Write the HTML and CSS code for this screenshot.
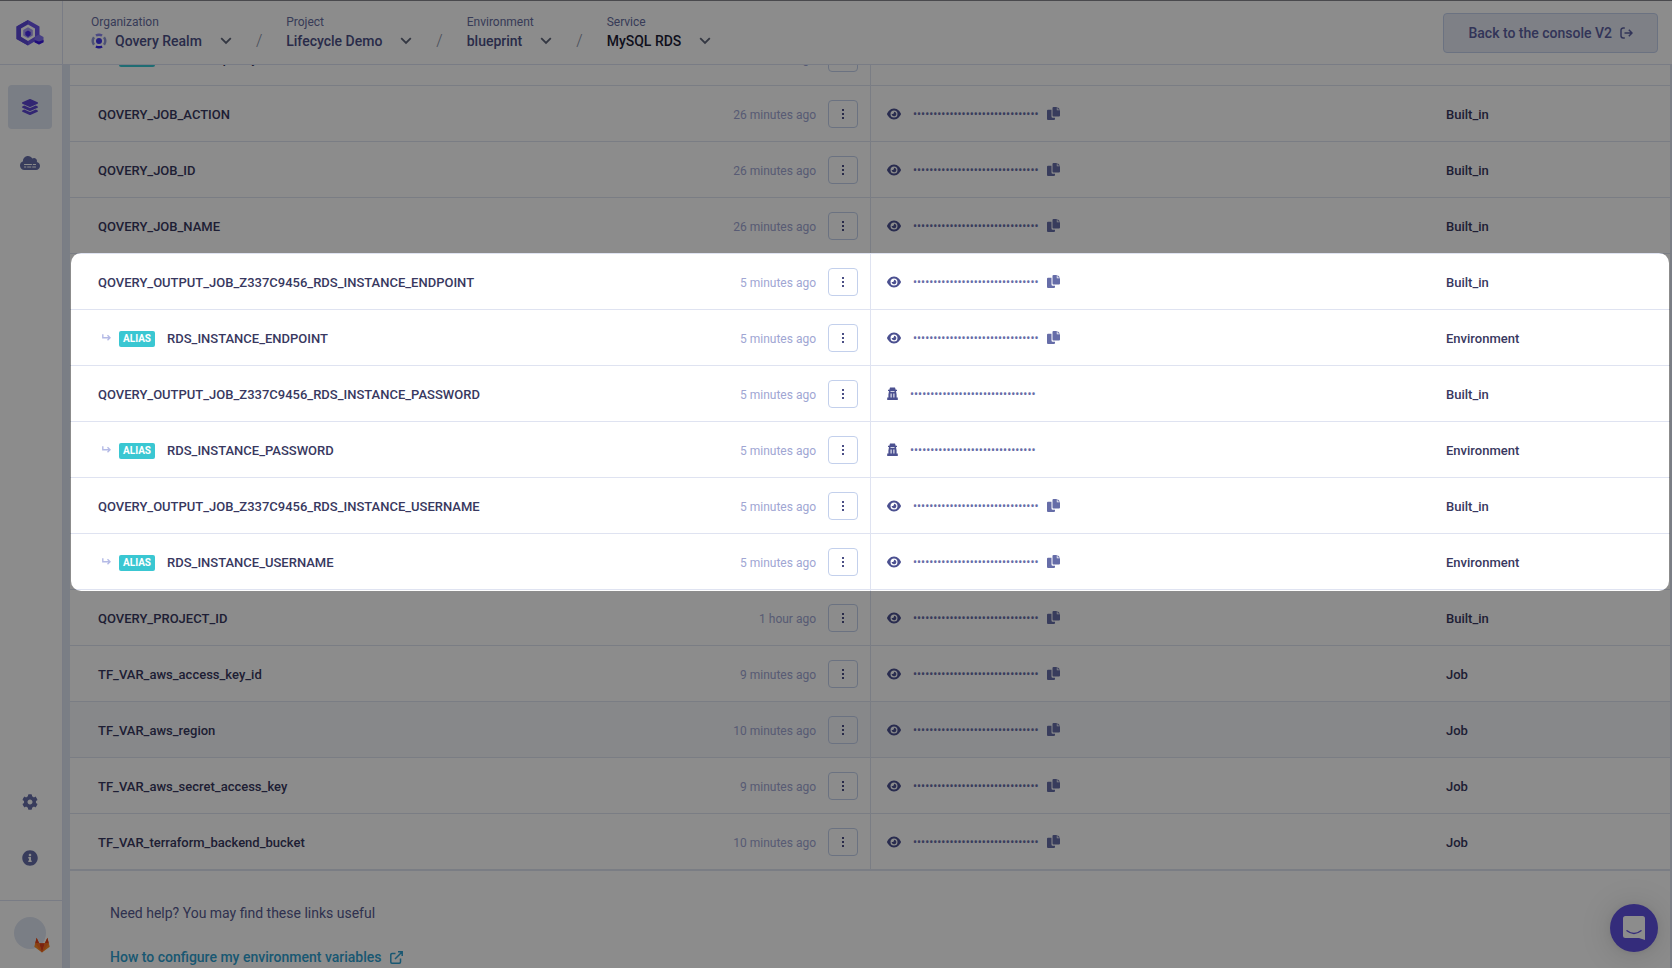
FILE: index.html
```html
<!DOCTYPE html>
<html lang="en">
<head>
<meta charset="utf-8">
<title>MySQL RDS - Environment variables</title>
<link rel="stylesheet" href="styles.css">
</head>
<body>
<svg class="sprite" aria-hidden="true">
  <symbol id="eye" viewBox="0 20 576 472"><path d="M288 32c-80.800 0-145.500 36.800-192.600 80.600C48.600 156 17.300 208 2.500 243.700c-3.300 7.900-3.300 16.700 0 24.600C17.300 304 48.600 356 95.400 399.400C142.500 443.200 207.200 480 288 480s145.500-36.800 192.600-80.600c46.800-43.500 78.100-95.400 93-131.100c3.300-7.900 3.300-16.700 0-24.600c-14.900-35.700-46.200-87.700-93-131.100C433.500 68.800 368.800 32 288 32zM144 256a144 144 0 1 1 288 0 144 144 0 1 1 -288 0zm144-64c0 35.300-28.700 64-64 64c-7.100 0-13.900-1.200-20.300-3.300c-5.500-1.800-11.900 1.600-11.700 7.400c.3 6.900 1.300 13.800 3.200 20.700c13.700 51.200 66.400 81.600 117.600 67.900s81.600-66.400 67.900-117.600c-11.100-41.500-47.800-69.400-88.600-71.100c-5.800-.2-9.200 6.100-7.400 11.700c2.100 6.400 3.300 13.200 3.300 20.300z"/></symbol>
  <symbol id="dots" viewBox="0 0 12 12"><rect x="5" y="1" width="2" height="2"/><rect x="5" y="5" width="2" height="2"/><rect x="5" y="9" width="2" height="2"/></symbol>
  <symbol id="copy" viewBox="0 0 13 13"><path d="M6.500 0H9.800v3.200H13v5.400a1 1 0 0 1-1 1H6.500a1 1 0 0 1-1-1V1a1 1 0 0 1 1-1z"/><path d="M10.500 0L13 2.500h-2.500z"/><path d="M1 2.800h3.500v6.700a1.200 1.200 0 0 0 1.200 1.200H8V12a1 1 0 0 1-1 1H1a1 1 0 0 1-1-1V3.800a1 1 0 0 1 1-1z"/></symbol>
  <symbol id="secret" viewBox="0 0 11 13"><path d="M3 .4h5l.7 2.400H10v1.200H9l.6 3.500v3h1.200V13H.2v-2.500h1.200v-3L2 4H1V2.800h1.300z"/><path class="cut" d="M3.500 4.300h4v.8h-4zM3.600 6.500h1v4h-1zM6.400 6.500h1v4h-1z"/></symbol>
  <symbol id="arrow" viewBox="0 0 9 7"><path d="M.8.3v3.400h7M5.500 1.200L8 3.700 5.500 6.200" fill="none" stroke="currentColor" stroke-width="1.400"/></symbol>
  <symbol id="chevron" viewBox="0 0 12 8"><path d="M1.200 1.200L6 6l4.800-4.800" fill="none" stroke="currentColor" stroke-width="1.800"/></symbol>
</svg>

<div class="app">
  <aside class="sidebar">
    <a class="logo" href="#" aria-label="Qovery">
      <svg width="28" height="26" viewBox="0 0 28 26">
        <path d="M12 0l11.500 6.500v12L12 25.500.500 19V6.500z" fill="#6a54e8"/>
        <path d="M12 0L.5 6.500V19L12 25.500V21l-7-4.200V8.600L12 4.500z" fill="#5b48d8"/>
        <path d="M12 4.500l7 4.100v8.200L12 21l-7-4.200V8.600z" fill="#fff"/>
        <path d="M12 7.300l4.800 2.700v5.600L12 18.300l-4.800-2.700V10z" fill="#a79cf5"/>
        <path d="M12 10.500l2.700 1.500v3L12 17l-2.700-2v-3z" fill="#4a2bea"/>
        <path d="M23 14.500l4.500 2.500v5.200L23 24.500l-4.500-2.300V17z" fill="#8273f2"/>
        <path d="M18.500 20l4.500 1.500 4.500-1.500v2.200L23 24.500l-4.500-2.300z" fill="#3b16e0"/>
      </svg>
    </a>
    <nav class="nav">
      <a class="nav-item active" href="#" aria-label="Projects"><svg width="16" height="16" viewBox="0 0 512 512"><path d="M12.410 148.020l232.940 105.670c6.800 3.090 14.490 3.090 21.290 0l232.940-105.670c16.550-7.510 16.550-32.520 0-40.030L266.650 2.310a25.607 25.607 0 0 0-21.290 0L12.410 107.980c-16.550 7.510-16.550 32.530 0 40.040zm487.180 88.280l-58.090-26.330-161.640 73.270c-7.560 3.430-15.590 5.170-23.860 5.170s-16.290-1.740-23.860-5.170L70.510 209.970l-58.100 26.330c-16.550 7.500-16.550 32.500 0 40l232.940 105.590c6.800 3.080 14.490 3.080 21.290 0L499.590 276.300c16.550-7.500 16.550-32.500 0-40zm0 127.800l-57.870-26.230-161.860 73.370c-7.560 3.430-15.590 5.170-23.860 5.170s-16.290-1.740-23.860-5.170L70.290 337.870 12.410 364.100c-16.550 7.500-16.550 32.500 0 40l232.940 105.590c6.800 3.080 14.490 3.080 21.290 0L499.590 404.100c16.550-7.500 16.550-32.500 0-40z"/></svg></a>
      <a class="nav-item" href="#" aria-label="Clusters"><svg width="20" height="16" viewBox="0 0 640 512"><path d="M537.600 226.600c4.100-10.700 6.400-22.400 6.400-34.600 0-53-43-96-96-96-19.700 0-38.100 6-53.300 16.200C367 64.200 315.300 32 256 32c-88.400 0-160 71.600-160 160 0 2.700.1 5.400.2 8.100C40.200 219.800 0 273.200 0 336c0 79.500 64.500 144 144 144h368c70.700 0 128-57.300 128-128 0-61.900-44-113.600-102.400-125.400z"/><path class="cut" d="M130 288h250v32H130zM410 288h100v32H410zM130 364h70v32h-70zM230 364h130v32H230zM390 364h120v32H390z"/></svg></a>
    </nav>
    <nav class="nav nav-bottom">
      <a class="nav-item" href="#" aria-label="Settings"><svg width="16" height="16" viewBox="0 0 512 512"><path d="M487.400 315.700l-42.600-24.600c4.300-23.200 4.300-47 0-70.200l42.600-24.600c4.900-2.800 7.100-8.600 5.500-14-11.100-35.600-30-67.800-54.700-94.600-3.800-4.100-10-5.100-14.800-2.300L380.800 110c-17.900-15.400-38.500-27.300-60.800-35.100V25.800c0-5.600-3.900-10.500-9.400-11.700-36.700-8.200-74.300-7.800-109.200 0-5.500 1.200-9.400 6.100-9.400 11.700V75c-22.200 7.900-42.800 19.800-60.800 35.100L88.700 85.500c-4.900-2.800-11-1.900-14.800 2.300-24.700 26.700-43.600 58.900-54.700 94.600-1.700 5.400.6 11.200 5.500 14L67.300 221c-4.300 23.200-4.300 47 0 70.200l-42.600 24.600c-4.900 2.800-7.100 8.600-5.500 14 11.100 35.600 30 67.800 54.700 94.600 3.800 4.100 10 5.100 14.800 2.300l42.600-24.600c17.900 15.400 38.500 27.300 60.800 35.100v49.200c0 5.600 3.900 10.500 9.400 11.700 36.700 8.200 74.300 7.800 109.200 0 5.500-1.200 9.400-6.100 9.400-11.700v-49.200c22.200-7.900 42.800-19.800 60.800-35.100l42.600 24.600c4.900 2.800 11 1.900 14.800-2.300 24.700-26.700 43.600-58.900 54.700-94.600 1.500-5.500-.7-11.300-5.600-14.100zM256 336c-44.100 0-80-35.900-80-80s35.900-80 80-80 80 35.900 80 80-35.900 80-80 80z"/></svg></a>
      <a class="nav-item" href="#" aria-label="Information"><svg width="16" height="16" viewBox="0 0 512 512"><path d="M256 8C119.043 8 8 119.083 8 256c0 136.997 111.043 248 248 248s248-111.003 248-248C504 119.083 392.957 8 256 8zm0 110c23.196 0 42 18.804 42 42s-18.804 42-42 42-42-18.804-42-42 18.804-42 42-42zm56 254c0 6.627-5.373 12-12 12h-88c-6.627 0-12-5.373-12-12v-24c0-6.627 5.373-12 12-12h12v-64h-12c-6.627 0-12-5.373-12-12v-24c0-6.627 5.373-12 12-12h64c6.627 0 12 5.373 12 12v100h12c6.627 0 12 5.373 12 12v24z"/></svg></a>
    </nav>
    <div class="account">
      <button class="avatar" type="button" aria-label="Account">
        <svg class="gitlab" width="16" height="16" viewBox="0 0 16 16"><path d="M8 15.500L.3 9.800 2.600.8l2.600 5.400h5.600L13.400.8l2.300 9z" fill="#fc8a26"/><path d="M8 15.500L5.200 6.200h5.600z" fill="#e0401f"/><path d="M2.600.8l2.600 5.400H1.200zM13.400.8l-2.600 5.400h4z" fill="#e0401f"/><path d="M8 15.500L1.200 6.200h4zM8 15.500l6.800-9.300h-4z" fill="#f96d26"/></svg>
      </button>
    </div>
  </aside>

  <div class="body">
    <header class="topbar">
      <nav class="crumbs" aria-label="Breadcrumb">
        <div class="crumb"><a href="#"><span class="crumb-label">Organization</span><span class="crumb-value"><svg width="16" height="16" viewBox="0 0 16 16"><circle cx="8" cy="8" r="3" fill="#4338e8"/><path d="M4.300 1.500a8 8 0 0 1 7.400 0L10.500 3.500a6 6 0 0 0-5 0z" fill="#8a86f0"/><path d="M4.300 14.500a8 8 0 0 0 7.400 0L10.500 12.500a6 6 0 0 1-5 0z" fill="#3326e8"/><path d="M2 3.500a8 8 0 0 0 0 9L4 11a5 5 0 0 1 0-6z" fill="#8f96d8"/><path d="M14 3.500a8 8 0 0 1 0 9L12 11a5 5 0 0 0 0-6z" fill="#8f96d8"/></svg>Qovery Realm</span></a><button type="button" aria-label="Change organization"><svg width="12" height="8"><use href="#chevron"/></svg></button></div>
        <span class="slash">/</span>
        <div class="crumb"><a href="#"><span class="crumb-label">Project</span><span class="crumb-value">Lifecycle Demo</span></a><button type="button" aria-label="Change project"><svg width="12" height="8"><use href="#chevron"/></svg></button></div>
        <span class="slash">/</span>
        <div class="crumb"><a href="#"><span class="crumb-label">Environment</span><span class="crumb-value">blueprint</span></a><button type="button" aria-label="Change environment"><svg width="12" height="8"><use href="#chevron"/></svg></button></div>
        <span class="slash">/</span>
        <div class="crumb current"><a href="#"><span class="crumb-label">Service</span><span class="crumb-value">MySQL RDS</span></a><button type="button" aria-label="Change service"><svg width="12" height="8"><use href="#chevron"/></svg></button></div>
      </nav>
      <a class="back" href="#">Back to the console V2<svg class="line" width="13" height="12" viewBox="0 0 13 12"><path d="M4.800 1H3.200A2.200 2.200 0 0 0 1 3.200v5.600A2.200 2.200 0 0 0 3.200 11h1.600M4.500 6H12M8.800 2.800L12 6 8.800 9.200"/></svg></a>
    </header>

    <main class="content">
      <div class="panel">
        <table class="vars">
          <colgroup><col class="col-name"><col class="col-value"><col class="col-scope"></colgroup>
          <tbody>
            <tr><td><div class="name"><svg class="arrow" width="9" height="7"><use href="#arrow"/></svg><span class="badge">ALIAS</span><span class="key">TF_VAR_qovery_environment_id</span><time>26 minutes ago</time><button type="button" aria-label="Actions"><svg width="12" height="12"><use href="#dots"/></svg></button></div></td><td></td><td></td></tr>
            <tr><td><div class="name"><span class="key">QOVERY_JOB_ACTION</span><time>26 minutes ago</time><button type="button" aria-label="Actions"><svg width="12" height="12"><use href="#dots"/></svg></button></div></td><td><div class="value"><svg width="14" height="12"><use href="#eye"/></svg><span class="mask">•••••••••••••••••••••••••••••••</span><svg class="copy" width="13" height="13"><use href="#copy"/></svg></div></td><td>Built_in</td></tr>
            <tr><td><div class="name"><span class="key">QOVERY_JOB_ID</span><time>26 minutes ago</time><button type="button" aria-label="Actions"><svg width="12" height="12"><use href="#dots"/></svg></button></div></td><td><div class="value"><svg width="14" height="12"><use href="#eye"/></svg><span class="mask">•••••••••••••••••••••••••••••••</span><svg class="copy" width="13" height="13"><use href="#copy"/></svg></div></td><td>Built_in</td></tr>
            <tr><td><div class="name"><span class="key">QOVERY_JOB_NAME</span><time>26 minutes ago</time><button type="button" aria-label="Actions"><svg width="12" height="12"><use href="#dots"/></svg></button></div></td><td><div class="value"><svg width="14" height="12"><use href="#eye"/></svg><span class="mask">•••••••••••••••••••••••••••••••</span><svg class="copy" width="13" height="13"><use href="#copy"/></svg></div></td><td>Built_in</td></tr>
            <tr><td><div class="name"><span class="key">QOVERY_OUTPUT_JOB_Z337C9456_RDS_INSTANCE_ENDPOINT</span><time>5 minutes ago</time><button type="button" aria-label="Actions"><svg width="12" height="12"><use href="#dots"/></svg></button></div></td><td><div class="value"><svg width="14" height="12"><use href="#eye"/></svg><span class="mask">•••••••••••••••••••••••••••••••</span><svg class="copy" width="13" height="13"><use href="#copy"/></svg></div></td><td>Built_in</td></tr>
            <tr><td><div class="name"><svg class="arrow" width="9" height="7"><use href="#arrow"/></svg><span class="badge">ALIAS</span><span class="key">RDS_INSTANCE_ENDPOINT</span><time>5 minutes ago</time><button type="button" aria-label="Actions"><svg width="12" height="12"><use href="#dots"/></svg></button></div></td><td><div class="value"><svg width="14" height="12"><use href="#eye"/></svg><span class="mask">•••••••••••••••••••••••••••••••</span><svg class="copy" width="13" height="13"><use href="#copy"/></svg></div></td><td>Environment</td></tr>
            <tr><td><div class="name"><span class="key">QOVERY_OUTPUT_JOB_Z337C9456_RDS_INSTANCE_PASSWORD</span><time>5 minutes ago</time><button type="button" aria-label="Actions"><svg width="12" height="12"><use href="#dots"/></svg></button></div></td><td><div class="value"><svg width="11" height="13"><use href="#secret"/></svg><span class="mask">•••••••••••••••••••••••••••••••</span></div></td><td>Built_in</td></tr>
            <tr><td><div class="name"><svg class="arrow" width="9" height="7"><use href="#arrow"/></svg><span class="badge">ALIAS</span><span class="key">RDS_INSTANCE_PASSWORD</span><time>5 minutes ago</time><button type="button" aria-label="Actions"><svg width="12" height="12"><use href="#dots"/></svg></button></div></td><td><div class="value"><svg width="11" height="13"><use href="#secret"/></svg><span class="mask">•••••••••••••••••••••••••••••••</span></div></td><td>Environment</td></tr>
            <tr><td><div class="name"><span class="key">QOVERY_OUTPUT_JOB_Z337C9456_RDS_INSTANCE_USERNAME</span><time>5 minutes ago</time><button type="button" aria-label="Actions"><svg width="12" height="12"><use href="#dots"/></svg></button></div></td><td><div class="value"><svg width="14" height="12"><use href="#eye"/></svg><span class="mask">•••••••••••••••••••••••••••••••</span><svg class="copy" width="13" height="13"><use href="#copy"/></svg></div></td><td>Built_in</td></tr>
            <tr><td><div class="name"><svg class="arrow" width="9" height="7"><use href="#arrow"/></svg><span class="badge">ALIAS</span><span class="key">RDS_INSTANCE_USERNAME</span><time>5 minutes ago</time><button type="button" aria-label="Actions"><svg width="12" height="12"><use href="#dots"/></svg></button></div></td><td><div class="value"><svg width="14" height="12"><use href="#eye"/></svg><span class="mask">•••••••••••••••••••••••••••••••</span><svg class="copy" width="13" height="13"><use href="#copy"/></svg></div></td><td>Environment</td></tr>
            <tr><td><div class="name"><span class="key">QOVERY_PROJECT_ID</span><time>1 hour ago</time><button type="button" aria-label="Actions"><svg width="12" height="12"><use href="#dots"/></svg></button></div></td><td><div class="value"><svg width="14" height="12"><use href="#eye"/></svg><span class="mask">•••••••••••••••••••••••••••••••</span><svg class="copy" width="13" height="13"><use href="#copy"/></svg></div></td><td>Built_in</td></tr>
            <tr><td><div class="name"><span class="key">TF_VAR_aws_access_key_id</span><time>9 minutes ago</time><button type="button" aria-label="Actions"><svg width="12" height="12"><use href="#dots"/></svg></button></div></td><td><div class="value"><svg width="14" height="12"><use href="#eye"/></svg><span class="mask">•••••••••••••••••••••••••••••••</span><svg class="copy" width="13" height="13"><use href="#copy"/></svg></div></td><td>Job</td></tr>
            <tr class="hovered"><td><div class="name"><span class="key">TF_VAR_aws_region</span><time>10 minutes ago</time><button type="button" aria-label="Actions"><svg width="12" height="12"><use href="#dots"/></svg></button></div></td><td><div class="value"><svg width="14" height="12"><use href="#eye"/></svg><span class="mask">•••••••••••••••••••••••••••••••</span><svg class="copy" width="13" height="13"><use href="#copy"/></svg></div></td><td>Job</td></tr>
            <tr><td><div class="name"><span class="key">TF_VAR_aws_secret_access_key</span><time>9 minutes ago</time><button type="button" aria-label="Actions"><svg width="12" height="12"><use href="#dots"/></svg></button></div></td><td><div class="value"><svg width="14" height="12"><use href="#eye"/></svg><span class="mask">•••••••••••••••••••••••••••••••</span><svg class="copy" width="13" height="13"><use href="#copy"/></svg></div></td><td>Job</td></tr>
            <tr><td><div class="name"><span class="key">TF_VAR_terraform_backend_bucket</span><time>10 minutes ago</time><button type="button" aria-label="Actions"><svg width="12" height="12"><use href="#dots"/></svg></button></div></td><td><div class="value"><svg width="14" height="12"><use href="#eye"/></svg><span class="mask">•••••••••••••••••••••••••••••••</span><svg class="copy" width="13" height="13"><use href="#copy"/></svg></div></td><td>Job</td></tr>
          </tbody>
        </table>
        <section class="help">
          <p>Need help? You may find these links useful</p>
          <a href="#">How to configure my environment variables<svg class="line" width="13" height="13" viewBox="0 0 13 13"><path d="M5.500 2.500H2a1.200 1.200 0 0 0-1.200 1.200V11A1.200 1.200 0 0 0 2 12.200h7.300a1.200 1.200 0 0 0 1.200-1.200V7.500M8 .8h4.200V5M12 1L5 8"/></svg></a>
        </section>
      </div>
    </main>
  </div>

  <button class="chat" type="button" aria-label="Open chat"><svg width="24" height="26" viewBox="0 0 24 26"><path d="M3.500 1h17A2.500 2.500 0 0 1 23 3.500V25l-6-2H3.500A2.500 2.500 0 0 1 1 20.500v-17A2.500 2.500 0 0 1 3.500 1z" fill="#fff"/><path d="M5 15.800q7 5.400 14 0" fill="none" stroke="#6050e0" stroke-width="1.400" stroke-linecap="round"/></svg></button>
  <div class="spotlight"></div>
</div>
</body>
</html>
```
FILE: styles.css
```css
* { box-sizing: border-box; }

body {
  margin: 0;
  font-family: Roboto, "Liberation Sans", sans-serif;
  font-size: 14px;
  line-height: 20px;
  color: #383860;
  background: #fff;
}

a { color: inherit; text-decoration: none; }

button {
  padding: 0;
  border: 0;
  background: none;
  font: inherit;
  color: inherit;
}

svg { display: block; flex: none; fill: currentColor; }
.line { fill: none; stroke: currentColor; stroke-width: 1.5; }
.sprite { position: absolute; width: 0; height: 0; }
.cut { fill: #fff; }

.app {
  position: relative;
  display: flex;
  height: 100vh;
  overflow: hidden;
  border-top: 1px solid #49494d;
}

/* Sidebar */
.sidebar {
  display: flex;
  flex-direction: column;
  flex: none;
  width: 63px;
  border-right: 1px solid #dde2f3;
  color: #666da8;
}

.logo {
  display: flex;
  align-items: center;
  height: 64px;
  padding-left: 16px;
  border-bottom: 1px solid #dde2f3;
}

.nav {
  display: flex;
  flex-direction: column;
  gap: 12px;
  padding: 20px 8px;
}

.nav-item {
  display: flex;
  align-items: center;
  justify-content: center;
  width: 44px;
  height: 44px;
  border-radius: 4px;
}

.nav-item.active { background: #dfe5f3; color: #5b45cf; }
.nav-bottom { margin-top: auto; }

.account {
  height: 68px;
  padding: 16px 14px;
  border-top: 1px solid #dde2f3;
}

.avatar {
  position: relative;
  display: block;
  width: 32px;
  height: 32px;
  border-radius: 50%;
  background: #dfe5f3;
}

.gitlab { position: absolute; right: -4px; bottom: -4px; }

/* Top bar */
.body {
  display: flex;
  flex-direction: column;
  flex: 1;
  min-width: 0;
}

.topbar {
  display: flex;
  flex: none;
  align-items: center;
  justify-content: space-between;
  height: 64px;
  padding: 0 14px 0 28px;
  border-bottom: 1px solid #dde2f3;
}

.crumbs { display: flex; align-items: flex-end; gap: 24px; }
.crumb { display: flex; align-items: flex-end; gap: 18px; color: #4b4f86; }
.crumb button { display: flex; align-items: center; height: 20px; color: #5d6478; }

/* The value alone sets the crumb's width; a longer label runs over the gap. */
.crumb-label {
  display: block;
  width: 0;
  margin-bottom: 1px;
  white-space: nowrap;
  font-size: 12px;
  line-height: 16px;
  color: #666da0;
}

.crumb-value {
  display: flex;
  align-items: center;
  gap: 8px;
  font-weight: 500;
}

.current .crumb-value { color: #1c1c36; }
.slash { font-size: 16px; font-weight: 300; color: #8088a0; }

.back {
  display: flex;
  align-items: center;
  gap: 8px;
  height: 40px;
  padding: 0 24px;
  border: 1px solid #c3d0ec;
  border-radius: 4px;
  background: #e6eaf5;
  color: #5b60a0;
  font-weight: 500;
}

/* Variables table */
.content {
  flex: 1;
  min-height: 0;
  overflow: hidden;
  padding: 0 2px 0 7px;
  background: #dfe5f3;
}

/* The list is scrolled part-way through its first row. */
.panel { margin-top: -35px; min-height: 100vh; background: #fff; }

.vars {
  width: 100%;
  table-layout: fixed;
  border-spacing: 0;
  border-bottom: 1px solid #dfe3f1;
}

.col-name { width: 50%; }
.col-value { width: 35%; }
.col-scope { width: 15%; }

.vars td {
  height: 56px;
  padding: 0 16px;
  border-bottom: 1px solid #dfe3f1;
  font-size: 13px;
  font-weight: 500;
}

.vars td:first-child { padding: 0 12px 0 28px; }
.vars td:nth-child(2) { border-left: 1px solid #dfe3f1; }
.vars td:last-child { padding-top: 2px; }
.hovered { background: #f6f8fc; }

.name, .value { display: flex; align-items: center; }
.name .key { flex: 1; padding-top: 3px; }
.name .arrow { margin: 0 8px 0 4px; color: #b4bae6; }

.badge {
  margin: 2px 12px 0 0;
  padding: 0 4px;
  border-radius: 2px;
  background: #3ac7d2;
  color: #fff;
  font-size: 10px;
  font-weight: 700;
  line-height: 16px;
}

.name time { margin-right: 12px; padding-top: 2px; font-size: 12px; font-weight: 400; color: #a0a6d3; }

.name button {
  display: flex;
  align-items: center;
  justify-content: center;
  width: 30px;
  height: 28px;
  border: 1px solid #c3d0ec;
  border-radius: 4px;
  color: #4b4f86;
}

.value { gap: 12px; color: #4b5090; }
.value .mask { font-size: 12px; font-weight: 400; color: #666da8; }
.value .copy { margin-left: -4px; color: #666da8; }

/* Help */
.help { padding: 32px 40px; color: #565a90; }
.help p { margin: 0 0 24px; }

.help a {
  display: flex;
  align-items: center;
  gap: 8px;
  color: #2e9fd0;
  font-weight: 500;
}

.chat {
  position: absolute;
  right: 14px;
  bottom: 16px;
  display: flex;
  align-items: center;
  justify-content: center;
  width: 48px;
  height: 48px;
  border-radius: 50%;
  background: #6050e0;
  box-shadow: 0 1px 6px rgba(0, 0, 0, .06), 0 2px 32px rgba(0, 0, 0, .16);
}

/* Dims everything around the highlighted rows */
.spotlight {
  position: absolute;
  top: 252px;
  right: 3px;
  left: 71px;
  height: 338px;
  border-radius: 10px;
  box-shadow: 0 0 0 2000px rgba(0, 0, 0, .45);
  pointer-events: none;
}
```
